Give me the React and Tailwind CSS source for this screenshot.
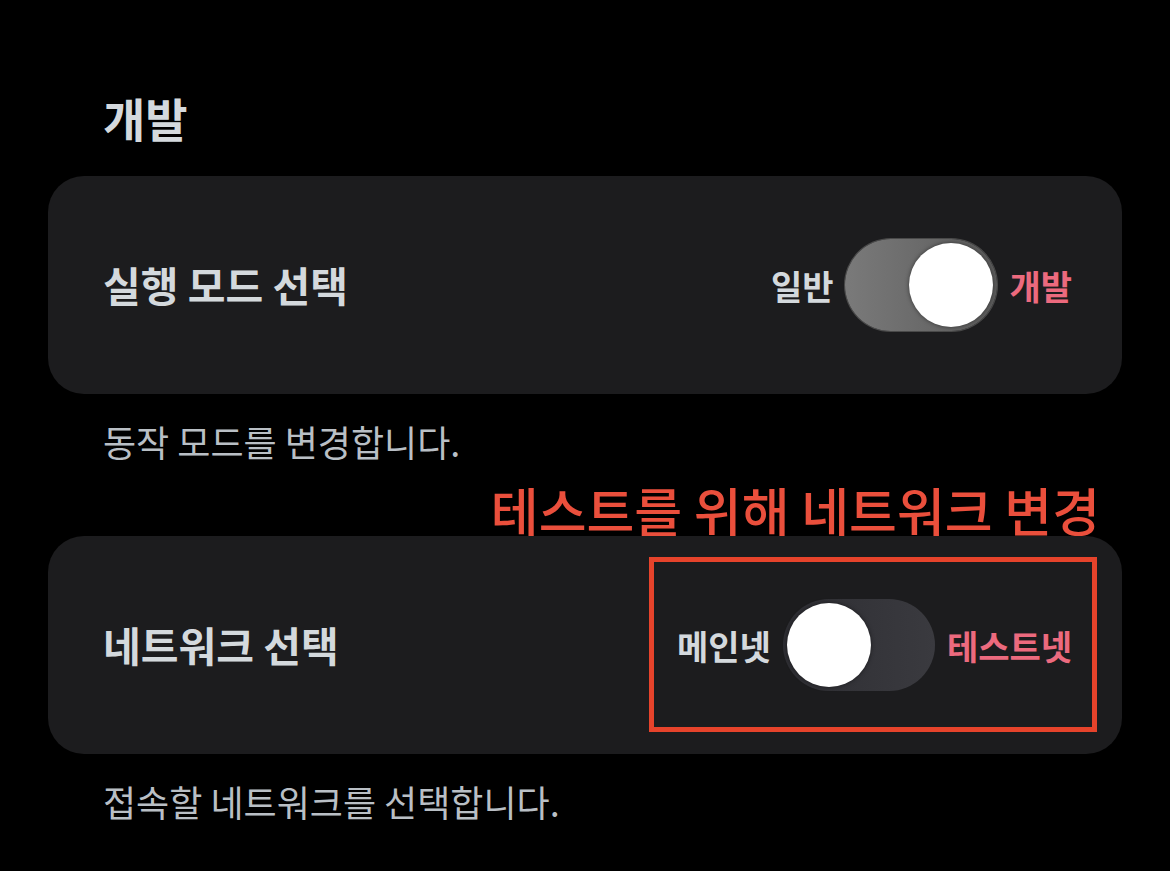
const font = "font-['Noto_Sans_CJK_KR','Noto_Sans',sans-serif]";

const Toggle = ({ on }) => (
  <div
    className={`relative w-[152px] h-[92px] rounded-full flex items-center px-[4px] ${
      on
        ? 'bg-gradient-to-r from-[#7a7a7a] to-[#5b5b5b] justify-end ring-1 ring-[#4a4a4a]'
        : 'bg-gradient-to-r from-[#2e2e33] to-[#3a3a3f] justify-start'
    }`}
  >
    <div className="w-[84px] h-[84px] rounded-full bg-white shadow-[0_0_4px_rgba(0,0,0,0.5)]" />
  </div>
);

const SettingCard = ({ title, left, right, on, children }) => (
  <div className="relative h-[218px] rounded-[36px] bg-[#1c1c1e] flex items-center justify-between pl-[55px] pr-[50px]">
    <span className="text-[41px] font-bold text-[#d4d9dd]">{title}</span>
    <div className="flex items-center gap-[12px]">
      <span className="text-[34px] font-bold text-[#d4d9dd]">{left}</span>
      <Toggle on={on} />
      <span className="text-[34px] font-bold text-[#ec6a7e]">{right}</span>
    </div>
    {children}
  </div>
);

export default function App() {
  return (
    <div className={`min-h-[871px] w-[1170px] bg-black px-[48px] ${font}`}>
      <div className="h-[176px] flex items-end pb-[36px] pl-[55px]">
        <h1 className="text-[46px] leading-none font-bold text-[#d4d9dd]">개발</h1>
      </div>

      <SettingCard title="실행 모드 선택" left="일반" right="개발" on />

      <div className="h-[94px] flex items-center pl-[55px]">
        <p className="text-[36px] text-[#b9bfc5]">동작 모드를 변경합니다.</p>
      </div>
      <div className="h-[48px] flex items-start justify-end pr-[22px]">
        <p className="text-[52px] leading-none font-medium text-[#ea4f3c] -mt-[4px]">테스트를 위해 네트워크 변경</p>
      </div>

      <SettingCard title="네트워크 선택" left="메인넷" right="테스트넷" on={false}>
        {/* annotation box */}
        <div className="absolute left-[601px] top-[21px] w-[448px] h-[175px] border-[5px] border-[#e6432b] pointer-events-none" />
      </SettingCard>

      <div className="h-[94px] flex items-center pl-[55px]">
        <p className="text-[36px] text-[#b9bfc5]">접속할 네트워크를 선택합니다.</p>
      </div>
    </div>
  );
}
